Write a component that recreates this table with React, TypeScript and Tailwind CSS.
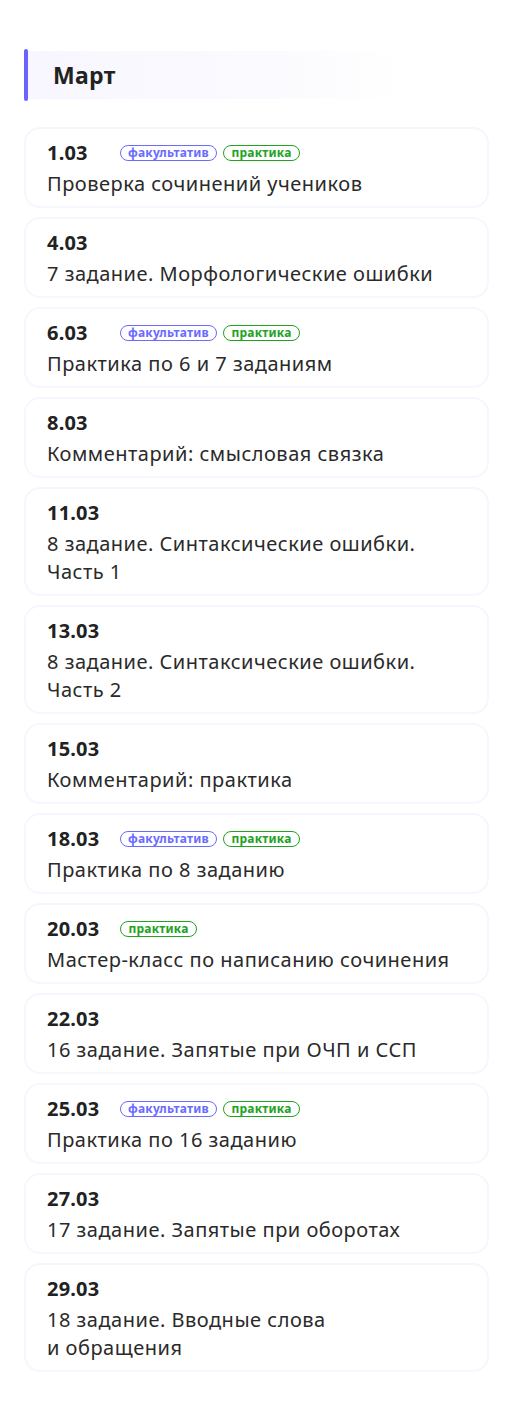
import React from "react";

type Item = { date: string; title: React.ReactNode; fac?: boolean; pr?: boolean };

const items: Item[] = [
  { date: "1.03", title: "Проверка сочинений учеников", fac: true, pr: true },
  { date: "4.03", title: "7 задание. Морфологические ошибки" },
  { date: "6.03", title: "Практика по 6 и 7 заданиям", fac: true, pr: true },
  { date: "8.03", title: "Комментарий: смысловая связка" },
  { date: "11.03", title: <>8 задание. Синтаксические ошибки.<br />Часть 1</> },
  { date: "13.03", title: <>8 задание. Синтаксические ошибки.<br />Часть 2</> },
  { date: "15.03", title: "Комментарий: практика" },
  { date: "18.03", title: "Практика по 8 заданию", fac: true, pr: true },
  { date: "20.03", title: "Мастер-класс по написанию сочинения", pr: true },
  { date: "22.03", title: "16 задание. Запятые при ОЧП и ССП" },
  { date: "25.03", title: "Практика по 16 заданию", fac: true, pr: true },
  { date: "27.03", title: "17 задание. Запятые при оборотах" },
  { date: "29.03", title: <>18 задание. Вводные слова<br />и обращения</> },
];

export default function App() {
  return (
    <div className="min-h-[1419px] bg-white px-[24px] pt-[49px] text-[#222222]" style={{ fontFamily: '"Noto Sans", "Liberation Sans", sans-serif' }}>
      <div className="flex h-[52px] w-[381px]">
        <div className="w-[4px] rounded-full bg-[#6b63ff]" />
        <div className="my-[2px] flex flex-1 items-center bg-gradient-to-r from-[#f8f7ff] via-[#f9f9ff] to-white pl-[25px]">
          <span className="text-[23px] font-bold leading-none tracking-[0.3px] text-[#222]">Март</span>
        </div>
      </div>
      <div className="mt-[26px] flex w-[465px] flex-col gap-[9px]">
        {items.map((it) => (
          <div key={it.date} className="rounded-[16px] border-2 border-[#f6f6ff] bg-white pb-[8px] pl-[21px] pr-4 pt-[12px]">
            <div className="flex h-[24px] items-center">
              <span className="w-[73px] text-[20px] font-bold leading-[24px] tracking-[0.2px] text-[#222]">{it.date}</span>
              {it.fac && (
                <span className="mr-[6px] flex h-[16px] w-[97px] items-center justify-center rounded-full border-[1.5px] border-[#6b6bff] pb-[1px] text-[12px] font-bold leading-none tracking-[0.2px] text-[#6b6bff]">
                  факультатив
                </span>
              )}
              {it.pr && (
                <span className="flex h-[16px] w-[77px] items-center justify-center rounded-full border-[1.5px] border-[#21a321] pb-[1px] text-[12px] font-bold leading-none tracking-[0.2px] text-[#21a321]">
                  практика
                </span>
              )}
            </div>
            <div className="mt-[5px] text-[20px] leading-[28px] tracking-[0.5px] text-[#2a2a2a]">{it.title}</div>
          </div>
        ))}
      </div>
    </div>
  );
}
